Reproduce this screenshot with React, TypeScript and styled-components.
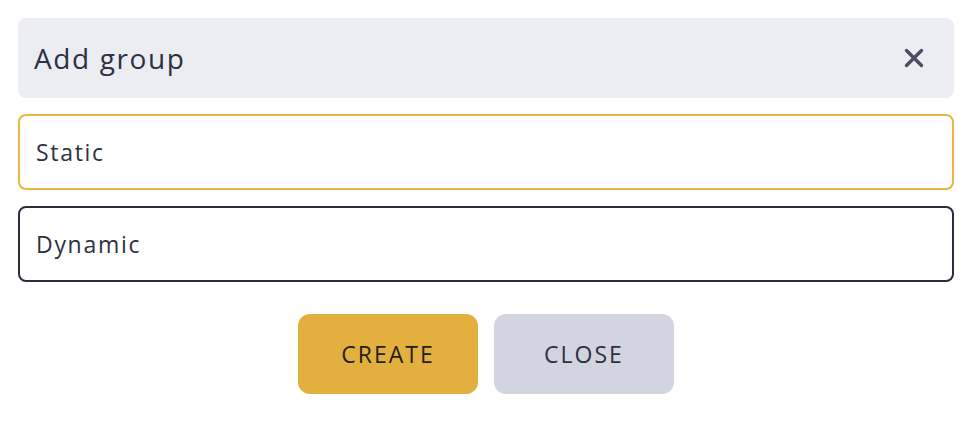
import React from 'react';
import styled, {createGlobalStyle} from "styled-components";

const GlobalStyle = createGlobalStyle`
  * {
    box-sizing: border-box;
  }

  body {
    margin: 0;
    background: #fff;
    font-family: "Open Sans", "Noto Sans", sans-serif;
    color: #2d3142;
  }
`

function App() {
    return (
        <>
            <GlobalStyle/>
            <Dialog>
                <Header>
                    <Title>Add group</Title>
                    <CloseIcon aria-label="close">
                        <svg width="20" height="20" viewBox="0 0 20 20">
                            <path d="M2.5 2.5 L17.5 17.5 M17.5 2.5 L2.5 17.5" stroke="#4a4f66" strokeWidth="3.4" strokeLinecap="round"/>
                        </svg>
                    </CloseIcon>
                </Header>
                <Option active={true}>Static</Option>
                <Option>Dynamic</Option>
                <Actions>
                    <Btn primary={true}>CREATE</Btn>
                    <Btn>CLOSE</Btn>
                </Actions>
            </Dialog>
        </>
    );
}

const Dialog = styled.div`
  width: 974px;
  padding: 18px 20px 0 18px;
  display: flex;
  flex-direction: column;
  gap: 16px;
`

const Header = styled.div`
  height: 80px;
  padding: 0 30px 0 16px;
  display: flex;
  align-items: center;
  justify-content: space-between;
  border-radius: 8px;
  background: #ecedf2;
`

const Title = styled.h2`
  margin: 0;
  font-size: 28px;
  font-weight: 500;
  color: #2d3142;
  letter-spacing: 1.6px;
`

const CloseIcon = styled.button`
  padding: 0;
  border: none;
  background: none;
  display: flex;
  cursor: pointer;
`

type OptionPropsType = {
    active?: boolean
}

const Option = styled.div<OptionPropsType>`
  height: 76px;
  padding: 0 16px;
  display: flex;
  align-items: center;
  border: 2px solid ${props => props.active ? "#e9b63f" : "#2a2d3b"};
  border-radius: 8px;
  font-size: 23px;
  font-weight: 500;
  color: #2d3142;
  letter-spacing: 1.7px;
`

const Actions = styled.div`
  margin-top: 16px;
  display: flex;
  justify-content: center;
  gap: 16px;
`

type BtnPropsType = {
    primary?: boolean
}

const Btn = styled.button<BtnPropsType>`
  width: 180px;
  height: 80px;
  border: none;
  border-radius: 12px;
  background: ${props => props.primary ? "#e3b040" : "#d2d4e0"};
  color: ${props => props.primary ? "#231f17" : "#2d3142"};
  font-family: "Open Sans", "Noto Sans", sans-serif;
  font-size: 23px;
  font-weight: 500;
  letter-spacing: 2px;
  cursor: pointer;
`

export default App;
